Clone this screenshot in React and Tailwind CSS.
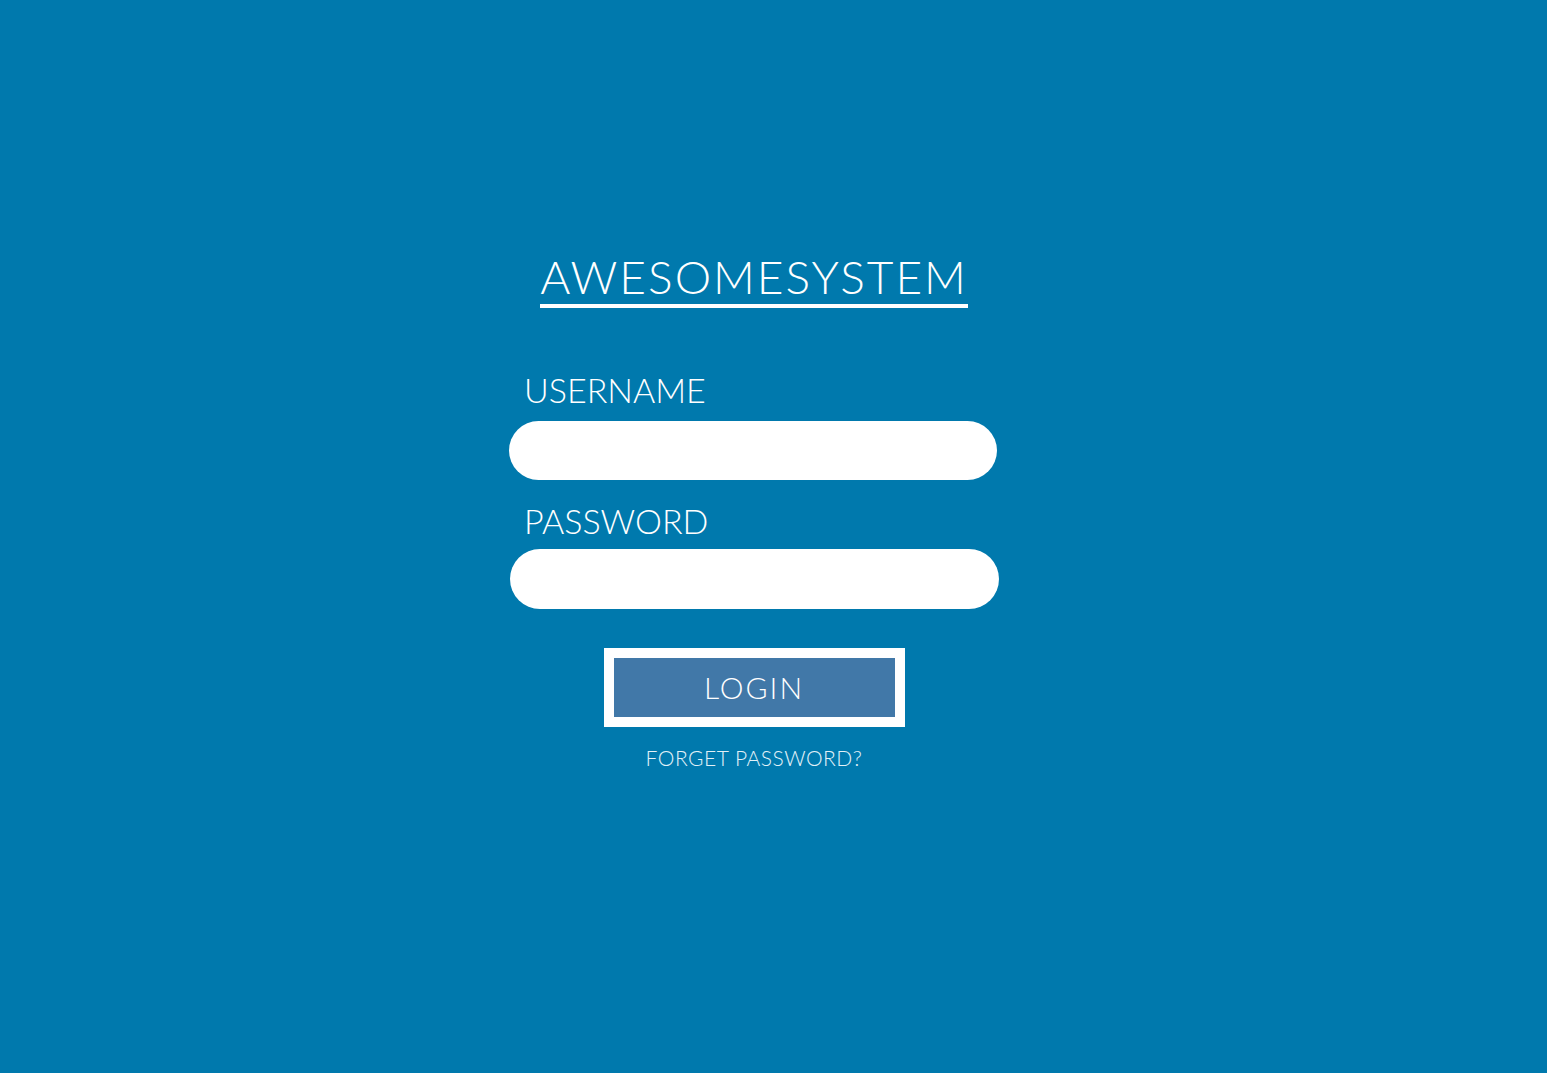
import React from "react";

const App = () => {
  return (
    <div
      className="min-h-screen w-full bg-[#0079ad] flex justify-center pr-[39px]"
      style={{ fontFamily: "Lato, 'Open Sans', sans-serif" }}
    >
      <div className="w-[490px] flex flex-col items-center pt-[250px]">
        <h1 className="text-white font-light text-[46px] leading-[54px] tracking-[2px] border-b-4 border-white">
          AWESOMESYSTEM
        </h1>

        <form className="w-full mt-[62px] flex flex-col">
          <label className="text-white font-light text-[34px] leading-[40px] pl-[15px]">
            USERNAME
          </label>
          <input
            type="text"
            className="mt-[11px] w-[488px] h-[59px] rounded-full bg-white outline-none px-6"
          />
          <label className="text-white font-light text-[34px] leading-[40px] pl-[15px] mt-[21px]">
            PASSWORD
          </label>
          <input
            type="password"
            className="mt-[8px] w-[489px] h-[60px] ml-px rounded-full bg-white outline-none px-6"
          />
          <div className="flex flex-col items-center mt-[39px]">
            <button
              type="button"
              className="w-[301px] h-[79px] border-[10px] border-white bg-[#4178a8] text-white font-light text-[30px] tracking-[2px]"
            >
              LOGIN
            </button>
            <a className="mt-[15px] text-[#e2f1f8] text-[21px] tracking-[0.5px] font-light">
              FORGET PASSWORD?
            </a>
          </div>
        </form>
      </div>
    </div>
  );
};

export default App;
